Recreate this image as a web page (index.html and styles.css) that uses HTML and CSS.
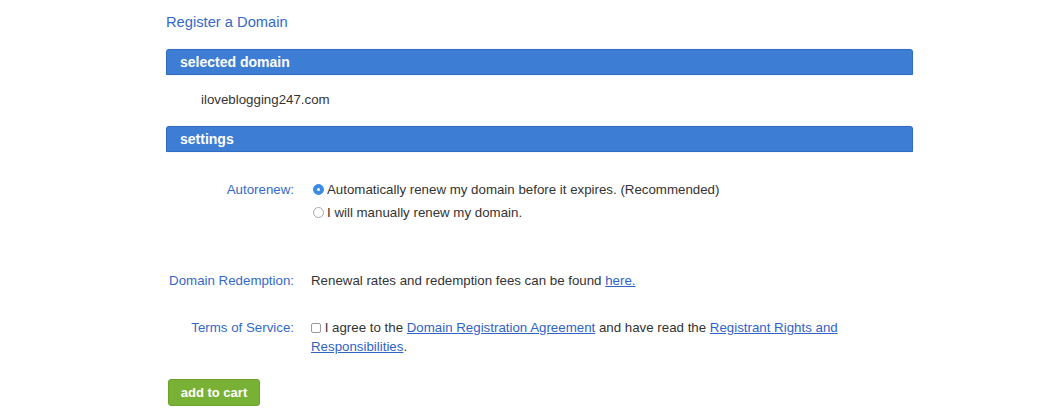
FILE: index.html
```html
<!DOCTYPE html>
<html lang="en">
<head>
<meta charset="utf-8">
<title>Register a Domain</title>
<link rel="stylesheet" href="styles.css">
</head>
<body>
<div class="page">
  <a class="title" href="#">Register a Domain</a>

  <div class="section-head head-selected">selected domain</div>
  <div class="domain">iloveblogging247.com</div>

  <div class="section-head head-settings">settings</div>

  <div class="form">
    <div class="row row-autorenew">
      <div class="label">Autorenew:</div>
      <div class="value options">
        <div class="option"><span class="radio checked"></span>Automatically renew my domain before it expires. (Recommended)</div>
        <div class="option"><span class="radio"></span>I will manually renew my domain.</div>
      </div>
    </div>

    <div class="row row-redemption">
      <div class="label">Domain Redemption:</div>
      <div class="value">Renewal rates and redemption fees can be found <a href="#">here.</a></div>
    </div>

    <div class="row row-terms">
      <div class="label">Terms of Service:</div>
      <div class="value terms"><span class="checkbox"></span> I agree to the <a href="#">Domain Registration Agreement</a> and have read the <a href="#">Registrant Rights and</a><br><a href="#">Responsibilities</a>.</div>
    </div>
  </div>

  <button class="cart" type="button">add to cart</button>
</div>
</body>
</html>
```

FILE: styles.css
```css
* { box-sizing: border-box; }

html, body {
  margin: 0;
  padding: 0;
  background: #ffffff;
}

body {
  font-family: "Liberation Sans", Arial, Helvetica, sans-serif;
  font-size: 13.3px;
  color: #333333;
}

.page {
  width: 747px;
  margin-left: 166px;
  padding-top: 14px;
  display: flex;
  flex-direction: column;
  align-items: stretch;
}

.title {
  font-size: 14.7px;
  line-height: 16px;
  color: #3469c9;
  text-decoration: none;
  align-self: flex-start;
}

.section-head {
  height: 26px;
  line-height: 24px;
  background: #3d7dd3;
  border: 1px solid #2f6cc2;
  border-radius: 3px 3px 0 0;
  color: #ffffff;
  font-weight: bold;
  font-size: 14px;
  padding-left: 13px;
  box-shadow: 0 0 1px rgba(61, 125, 211, 0.5);
}

.head-selected { margin-top: 19px; }
.head-settings { margin-top: 18px; }

.domain {
  margin-top: 17px;
  padding-left: 35px;
  line-height: 16px;
  color: #333333;
}

.form {
  display: flex;
  flex-direction: column;
}

.row {
  display: grid;
  grid-template-columns: 128px 1fr;
  column-gap: 17px;
  line-height: 19px;
}

.label {
  text-align: right;
  color: #3469c9;
}

.row-autorenew { margin-top: 26px; }
.row-autorenew .label { line-height: 23px; }
.row-redemption { margin-top: 47px; }
.row-terms { margin-top: 28px; }

.options .option {
  line-height: 23px;
  display: flex;
  align-items: center;
}

.radio {
  display: inline-block;
  width: 11px;
  height: 11px;
  border-radius: 50%;
  border: 1px solid #a9a9a9;
  background: #ffffff;
  margin: 0 3px 0 2px;
  position: relative;
  flex: none;
}

.radio.checked {
  border-color: #3c8ce6;
  background: #3c8ce6;
}

.radio.checked::after {
  content: "";
  position: absolute;
  left: 3px;
  top: 3px;
  width: 3px;
  height: 3px;
  border-radius: 50%;
  background: #ffffff;
}

.checkbox {
  display: inline-block;
  width: 10px;
  height: 10px;
  border: 1px solid #9a9a9a;
  border-radius: 2px;
  background: #ffffff;
  vertical-align: -1px;
}

.value a {
  color: #2f63c6;
  text-decoration: underline;
}

.cart {
  align-self: flex-start;
  margin: 23px 0 0 2px;
  height: 27px;
  width: 92px;
  padding: 0;
  background: #78b136;
  border: 1px solid #6aa22c;
  border-radius: 3px;
  color: #ffffff;
  font-family: "Liberation Sans", Arial, Helvetica, sans-serif;
  font-size: 13px;
  font-weight: bold;
  cursor: pointer;
}
```
